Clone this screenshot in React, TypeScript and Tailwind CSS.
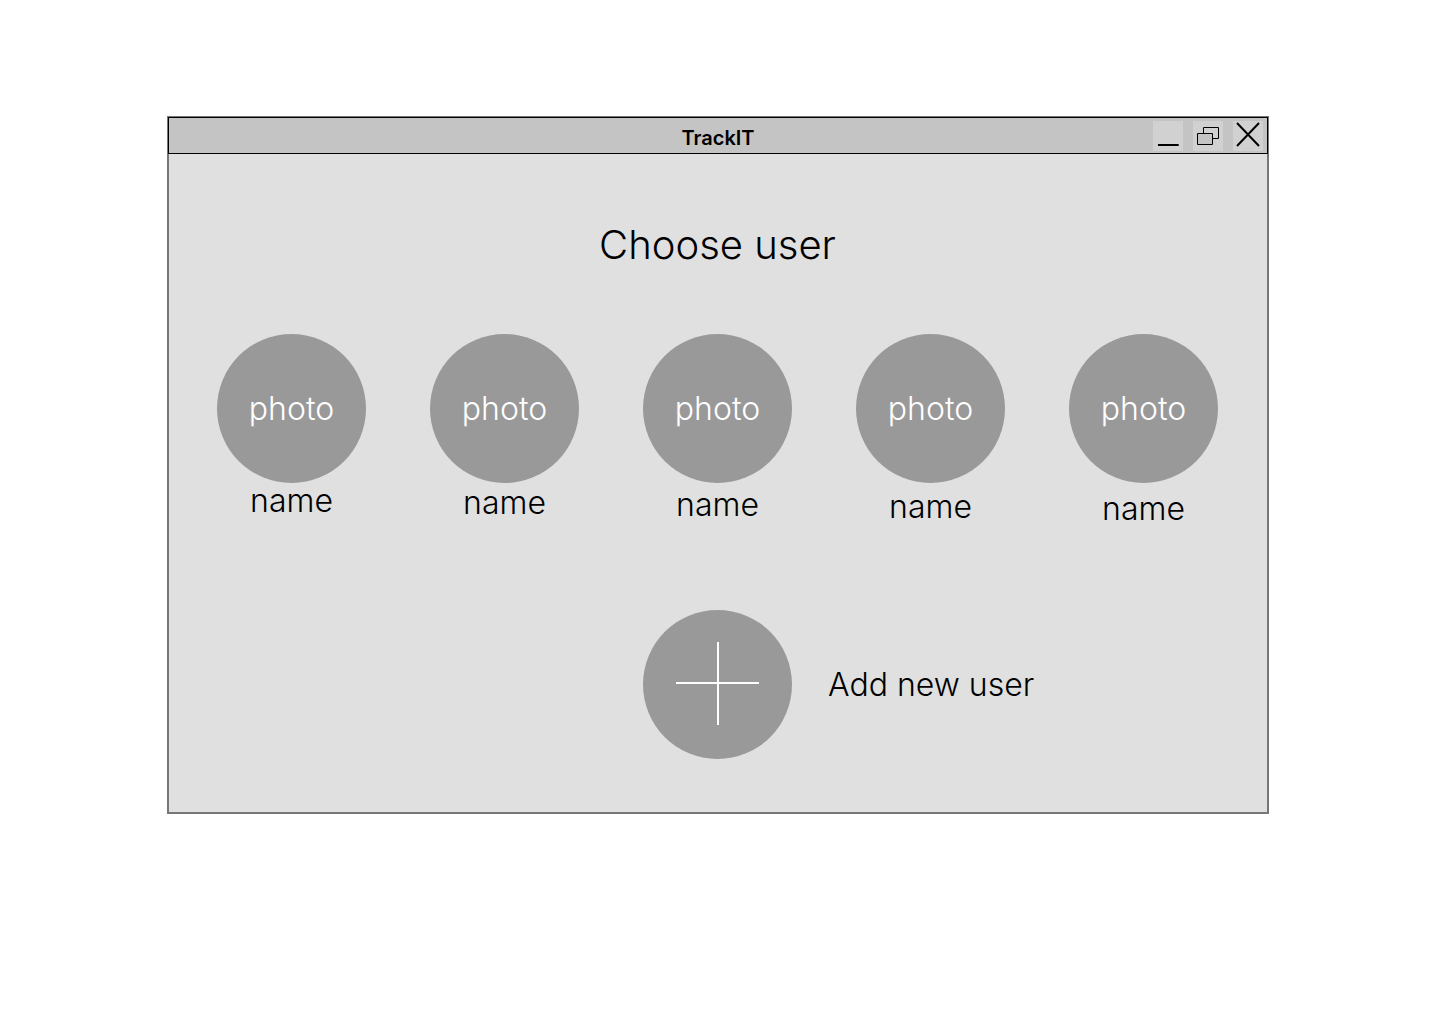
const users = [
  { id: 1, pad: 'pt-0' },
  { id: 2, pad: 'pt-0.5' },
  { id: 3, pad: 'pt-1' },
  { id: 4, pad: 'pt-1.5' },
  { id: 5, pad: 'pt-2' },
];

function TitleBar() {
  return (
    <header className="-mx-px -mt-px grid grid-cols-[1fr_auto_1fr] items-center border border-black bg-[#c4c4c4]">
      <h1 className="col-start-2 pt-[5px] text-xl leading-[30px] font-semibold">TrackIT</h1>
      <div className="flex gap-[10px] justify-self-end pr-1">
        <button type="button" aria-label="Minimize" className="size-[30px] bg-[#d1d1d1]">
          <svg viewBox="0 0 30 30" className="size-full" fill="none" stroke="black">
            <path d="M5 24H25.7" strokeWidth="2" />
          </svg>
        </button>
        <button type="button" aria-label="Restore" className="size-[30px] bg-[#d1d1d1]">
          <svg viewBox="0 0 30 30" className="size-full" stroke="black">
            <path fill="#d1d1d1" d="M10.5 6.5H25.5V17.5H10.5Z" />
            <path fill="#c4c4c4" d="M4.5 12.5H19.5V23.5H4.5Z" />
          </svg>
        </button>
        <button type="button" aria-label="Close" className="size-[30px] bg-[#d1d1d1]">
          <svg viewBox="0 0 30 30" className="size-full" fill="none" stroke="black" strokeWidth="2">
            <path d="M4 2L26 25M26 2L4 25" />
          </svg>
        </button>
      </div>
    </header>
  );
}

export default function App() {
  return (
    <div className="min-h-screen bg-white pt-[116px] pr-[171px] pb-16 pl-[167px] font-['Inter',sans-serif] font-light text-black">
      <main className="border-2 border-[#777777] bg-[#e0e0e0]">
        <TitleBar />
        <div className="pt-[67px] pr-[49px] pb-[53px] pl-12">
          <h2 className="text-center text-[40px] leading-12">Choose user</h2>
          <ul className="mt-[65px] flex justify-between">
            {users.map((user) => (
              <li key={user.id}>
                <button type="button" className="flex flex-col items-center">
                  <span className="flex size-[149px] items-center justify-center rounded-full bg-[#999999] text-[32px] text-white">
                    photo
                  </span>
                  <span className={`text-[32px] leading-9 ${user.pad}`}>name</span>
                </button>
              </li>
            ))}
          </ul>
          <div className="mt-[83px] grid grid-cols-[1fr_149px_1fr]">
            <button type="button" className="col-span-2 col-start-2 flex items-center gap-9 justify-self-start">
              <span className="flex size-[149px] items-center justify-center rounded-full bg-[#999999]">
                <svg viewBox="0 0 149 149" className="size-full" fill="none" stroke="white" strokeWidth="2">
                  <path d="M33 73H116M75 32V115" />
                </svg>
              </span>
              <span className="text-[32px]">Add new user</span>
            </button>
          </div>
        </div>
      </main>
    </div>
  );
}
